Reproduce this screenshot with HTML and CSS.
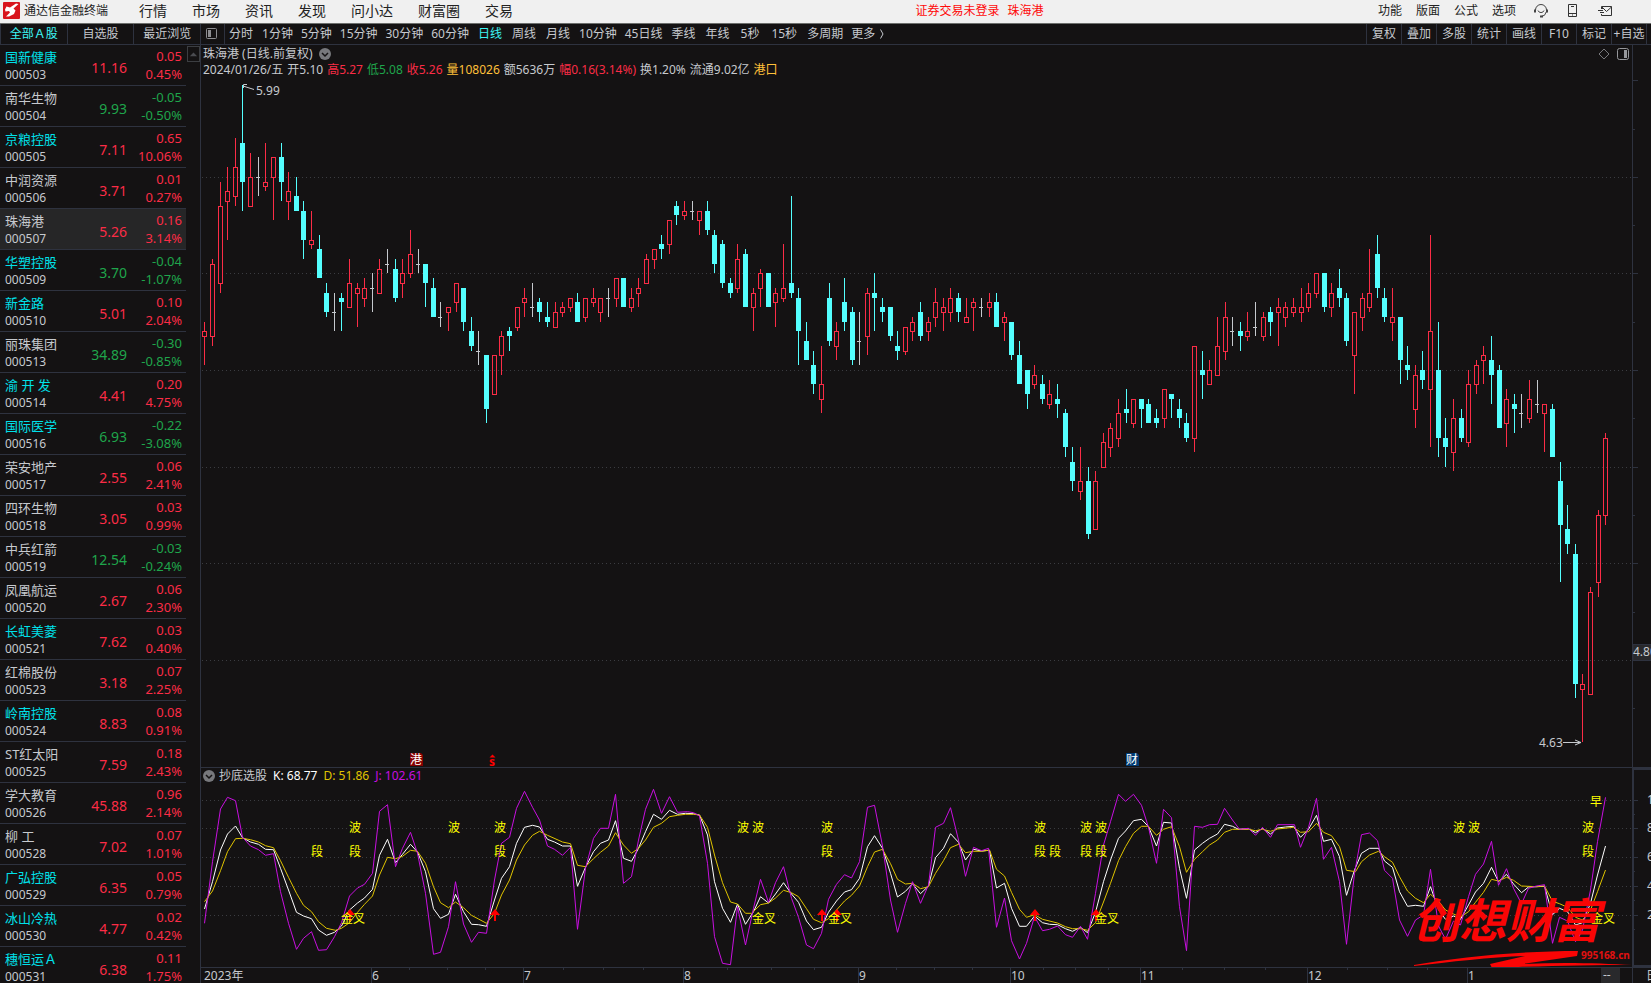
FILE: index.html
```html
<!DOCTYPE html>
<html lang="zh-CN">
<head>
<meta charset="utf-8">
<title>通达信金融终端</title>
<link rel="stylesheet" href="styles.css">
</head>
<body>
<header class="topbar">
  <div class="brand">
    <svg class="logo" viewBox="0 0 17 17" aria-hidden="true"><rect width="17" height="17" rx="1" fill="#d8141c"/><path d="M2 7.500 3.500 4.500 7 5.500 13 1.500 15.500 2 10.500 6.500 12.500 8.500 11 12 6 14.500 3 14.500 7 10.500 6 9 2.500 9.500z" fill="#fff"/></svg>
    <span>通达信金融终端</span>
  </div>
  <nav class="menu">
    <button>行情</button><button>市场</button><button>资讯</button><button>发现</button><button>问小达</button><button>财富圈</button><button>交易</button>
  </nav>
  <p class="login"><span>证券交易未登录</span><span>珠海港</span></p>
  <nav class="menu-right">
    <button>功能</button><button>版面</button><button>公式</button><button>选项</button>
  </nav>
  <div class="tools">
    <button aria-label="客服"><svg viewBox="0 0 16 16"><path d="M2.500 9V7a5.500 5.500 0 0 1 11 0v2M5 7.500a3.200 3.200 0 0 0 6 0M13.200 9a5.500 5.500 0 0 1-5 4.500" fill="none" stroke="#444"/><path d="M1 6.500h2v3H1zM13 6.500h2v3h-2zM7 12.500h3v2H7z" fill="#444"/></svg></button>
    <button aria-label="手机"><svg viewBox="0 0 16 16"><path d="M3.500 1.500h8v12h-8zM3.500 10.500h8M6 3.500h3" fill="none" stroke="#333"/><path d="M7 11.500h1v1H7z" fill="#333"/></svg></button>
    <button aria-label="邮件"><svg viewBox="0 0 16 16"><path d="M4.500 6V3.500h10v9h-10V11M5 4l4.500 4.500L14.500 4M1 7.500h5M3 9.500h4M4 5.500h2" fill="none" stroke="#333"/></svg></button>
  </div>
</header>

<div class="workspace">
  <aside class="sidebar">
    <nav class="tabs"><button class="active">全部Ａ股</button><button>自选股</button><button>最近浏览</button></nav>
    <div class="list-wrap">
      <table class="stocks"><tbody id="stocks"></tbody></table>
      <button class="scroll-up" aria-label="向上滚动"><svg viewBox="0 0 12 14"><path d="M2 9 6 5l4 4z" fill="#4a4b50"/></svg></button>
    </div>
  </aside>

  <main class="chart">
    <div class="toolbar">
      <button class="panel-toggle" aria-label="显示侧栏"><svg viewBox="0 0 13 12"><rect x="1.500" y=".5" width="10" height="10" rx="1" fill="none" stroke="#8d8d91"/><path d="M3 2h3v7H3z" fill="#8d8d91"/></svg></button>
      <nav class="periods">
        <button>分时</button><button class="long">1分钟</button><button class="long">5分钟</button><button class="long">15分钟</button><button class="long">30分钟</button><button class="long">60分钟</button><button class="active">日线</button><button>周线</button><button>月线</button><button class="long">10分钟</button><button class="long">45日线</button><button>季线</button><button>年线</button><button class="sec">5秒</button><button class="sec">15秒</button><button class="long">多周期</button><button class="long more">更多<svg viewBox="0 0 6 12"><path d="M1.500 1.500 4 6l-2.500 4.500" fill="none" stroke="#c6c9ce"/></svg></button>
      </nav>
      <nav class="actions">
        <button>复权</button><button>叠加</button><button>多股</button><button>统计</button><button>画线</button><button>F10</button><button>标记</button><button>+自选</button>
      </nav>
    </div>

    <section class="panel price-panel">
      <svg id="price" viewBox="201 45 1450 722" preserveAspectRatio="xMinYMin meet" aria-label="珠海港日线"></svg>
      <div class="caption">
        <h1>珠海港 (日线.前复权)<svg class="drop" viewBox="0 0 12 12"><circle cx="6" cy="6" r="6" fill="#77787c"/><path d="M3 5l3 3 3-3" fill="none" stroke="#141213" stroke-width="1.500"/></svg></h1>
        <p class="quote"><span>2024/01/26/五</span><span>开5.10</span><span class="up">高5.27</span><span class="down">低5.08</span><span class="up">收5.26</span><span class="gold">量108026</span><span>额5636万</span><span class="up">幅0.16(3.14%)</span><span>换1.20%</span><span>流通9.02亿</span><span class="gold">港口</span></p>
      </div>
      <div class="corner">
        <svg viewBox="0 0 12 12"><path d="M6 1l5 5-5 5-5-5z" fill="none" stroke="#77787c"/></svg>
        <svg viewBox="0 0 12 12"><rect x=".5" y=".5" width="11" height="11" rx="2" fill="none" stroke="#96979b"/><path d="M7 2h3v8H7z" fill="#96979b"/></svg>
      </div>
    </section>

    <section class="panel kdj-panel">
      <svg id="kdj" viewBox="201 768 1450 199" preserveAspectRatio="xMinYMin meet" aria-label="抄底选股"></svg>
      <p class="kdj-caption"><svg class="drop" viewBox="0 0 12 12"><circle cx="6" cy="6" r="6" fill="#77787c"/><path d="M3 5l3 3 3-3" fill="none" stroke="#141213" stroke-width="1.500"/></svg><span>抄底选股</span><span class="k">K: 68.77</span><span class="d">D: 51.86</span><span class="j">J: 102.61</span></p>
    </section>

    <section class="panel time-panel">
      <svg id="time" viewBox="201 968 1450 15" preserveAspectRatio="xMinYMin meet" aria-label="时间轴"></svg>
    </section>
  </main>
</div>
<script src="chart.js"></script>
</body>
</html>
```

FILE: styles.css
```css
* { box-sizing: border-box; }
html, body { height: 100%; }
body {
  margin: 0;
  display: flex;
  flex-direction: column;
  overflow: hidden;
  background: #141213;
  color: #c6c9ce;
  font: 12px/16px "Noto Sans", "Noto Sans CJK SC", sans-serif;
}
p, h1 { margin: 0; font-size: 12px; font-weight: 400; }
button {
  margin: 0;
  padding: 0;
  border: 0;
  background: none;
  color: inherit;
  font: inherit;
  white-space: nowrap;
}
svg { display: block; }

.topbar {
  position: relative;
  flex: none;
  display: flex;
  align-items: center;
  height: 24px;
  padding-bottom: 2px;
  background: #f0f0f0;
  border-bottom: 1px solid #6c6e6c;
  color: #222;
}
.brand { display: flex; align-items: center; gap: 4px; width: 139px; padding-left: 3px; }
.logo { width: 17px; height: 17px; }
.menu { display: flex; gap: 25px; font-size: 14px; }
.login {
  position: absolute;
  left: 0;
  right: 0;
  margin: 0 auto;
  width: 128px;
  display: flex;
  gap: 8px;
  color: #ff0a0a;
  white-space: nowrap;
  translate: 154px;
}
.menu-right { display: flex; gap: 14px; margin-left: auto; }
.tools { display: flex; gap: 16px; padding: 0 38px 0 17px; }
.tools svg { width: 16px; height: 16px; }

.workspace { flex: 1; display: flex; min-height: 0; }
.sidebar { flex: none; width: 201px; display: flex; flex-direction: column; border-right: 1px solid #2e323f; }
.tabs { flex: none; display: flex; height: 21px; border-bottom: 1px solid #2e323f; }
.tabs button { flex: 1; border-left: 1px solid #2e323f; }
.active { color: #3df5f5; }
.list-wrap { flex: 1; min-height: 0; display: flex; align-items: flex-start; overflow: hidden; }
.stocks { flex: 1; border-spacing: 0; table-layout: fixed; }
.stocks td { height: 41px; padding: 0; border-bottom: 1px solid #2e323f; vertical-align: middle; text-align: right; font-size: 13px; }
.stocks td:first-child { width: 70px; padding-left: 5px; text-align: left; }
.stocks td:nth-child(2) { padding-top: 6px; width: 57px; font-size: 14px; }
.stocks td:last-child { padding-right: 4px; }
.stocks span { display: block; line-height: 18px; white-space: nowrap; }
.stocks .code { font-size: 12px; line-height: 17px; }
.stocks .selected { background: #262627; }
.up { color: #fb2c46; }
.down { color: #1fa54b; }
.gold { color: #ffc03a; }
.linked { color: #00e1ea; }
.scroll-up { flex: none; width: 13px; height: 16px; margin: 1px 0 0 1px; border: 1px solid #3c3e42; }

.chart { flex: 1; min-width: 0; display: flex; flex-direction: column; }
.toolbar { flex: none; display: flex; height: 21px; border-bottom: 1px solid #2e323f; overflow: hidden; }
.panel-toggle { width: 24px; padding-left: 4px; border-right: 1px solid #2e323f; }
.panel-toggle svg { width: 13px; height: 12px; }
.periods { display: flex; gap: 8px; padding-left: 3px; }
.periods button { padding: 0 1px; }
.periods .long { padding: 0; }
.periods .sec { padding: 0 2px; }
.periods .more { display: flex; align-items: center; gap: 4px; }
.more svg { width: 6px; height: 12px; }
.actions { display: flex; margin-left: auto; padding-right: 4px; border-left: 1px solid #2e323f; }
.actions button { width: 35px; border-right: 1px solid #2e323f; }

.panel { position: relative; flex: none; overflow: hidden; }
.panel > svg { width: 100%; height: 100%; }
.price-panel { flex: 1; min-height: 0; }
.kdj-panel { height: 200px; border-top: 1px solid #2e323f; }
.time-panel { height: 16px; border-top: 1px solid #2e323f; }
.caption { position: absolute; left: 2px; top: 1px; white-space: nowrap; }
.caption h1 { display: flex; align-items: center; gap: 6px; line-height: 16px; }
.quote { display: flex; gap: 4px; }
.drop { width: 12px; height: 12px; }
.corner { position: absolute; right: 22px; top: 3px; display: flex; gap: 7px; }
.corner svg { width: 12px; height: 12px; }
.kdj-caption { position: absolute; left: 2px; top: 0; display: flex; align-items: center; gap: 6px; white-space: nowrap; }
.kdj-caption .drop { margin-right: -2px; }
.k { color: #fff; }
.d { color: #e0c400; }
.j { color: #c80fe0; }

.grid { stroke: #3b3c41; stroke-dasharray: 1 3; }
.frame { stroke: #2e323f; fill: none; }
.axis-text { fill: #c6c9ce; font-size: 12px; }
.signal { fill: #ffff00; font-size: 12px; }
.line { fill: none; stroke-width: 1; vector-effect: non-scaling-stroke; }
.line-k { stroke: #fff; }
.line-d { stroke: #e0c400; }
.line-j { stroke: #c80fe0; }
.mark { fill: #fff; font-size: 12px; }
.stamp { fill: #fa0505; font-family: "Noto Sans CJK SC", sans-serif; font-size: 47px; font-style: italic; font-weight: 700; }
.site { fill: #e01010; font-size: 10px; font-weight: 700; }
```

FILE: chart.js
```javascript
// name, code, price, change, percent, linked
const stocks = `国新健康|000503|11.16|0.05|0.45%|1
南华生物|000504|9.93|-0.05|-0.50%|0
京粮控股|000505|7.11|0.65|10.06%|1
中润资源|000506|3.71|0.01|0.27%|0
珠海港|000507|5.26|0.16|3.14%|0
华塑控股|000509|3.70|-0.04|-1.07%|1
新金路|000510|5.01|0.10|2.04%|1
丽珠集团|000513|34.89|-0.30|-0.85%|0
渝 开 发|000514|4.41|0.20|4.75%|1
国际医学|000516|6.93|-0.22|-3.08%|1
荣安地产|000517|2.55|0.06|2.41%|0
四环生物|000518|3.05|0.03|0.99%|0
中兵红箭|000519|12.54|-0.03|-0.24%|0
凤凰航运|000520|2.67|0.06|2.30%|0
长虹美菱|000521|7.62|0.03|0.40%|1
红棉股份|000523|3.18|0.07|2.25%|0
岭南控股|000524|8.83|0.08|0.91%|1
ST红太阳|000525|7.59|0.18|2.43%|0
学大教育|000526|45.88|0.96|2.14%|0
柳 工|000528|7.02|0.07|1.01%|0
广弘控股|000529|6.35|0.05|0.79%|1
冰山冷热|000530|4.77|0.02|0.42%|1
穗恒运Ａ|000531|6.38|0.11|1.75%|1`;

document.getElementById('stocks').innerHTML = stocks.split('\n').map(row => {
  const [name, code, price, change, pct, linked] = row.split('|');
  const dir = change[0] === '-' ? 'down' : 'up';
  return `<tr class="${code === '000507' ? 'selected' : ''}"><td><span class="${linked === '1' ? 'linked' : ''}">${name}</span><span class="code">${code}</span></td><td class="${dir}">${price}</td><td class="${dir}"><span>${change}</span><span>${pct}</span></td></tr>`;
}).join('');

// Daily bars: direction (R rise, B fall, D flat), then high, body top, body bottom, low in cents below 5.99
const bars = `R49,51,52,58 R36,37,52,54 R20,25,41,43 R17,22,24,32 R11,17,23,25 B0,12,20,26 R14,19,25,25 D15,19,19,23 R12,20,21,22 R15,15,19,28
B12,15,20,24 R18,22,24,28 B19,23,26,26 B24,26,32,36 R26,32,33,34 B31,34,40,40 B41,43,47,48 D43,47,47,51 B43,44,45,51 R36,41,46,46
R41,42,43,50 R40,42,44,46 D39,42,42,47 R36,38,43,43 D34,37,37,39 B36,38,44,45 R36,39,41,44 R30,35,39,40 D34,37,37,39 B37,37,41,46
B40,42,48,48 D45,48,48,50 R46,46,47,51 R41,41,45,47 B42,42,49,51 B48,51,54,55 D51,55,55,58 B56,56,67,70 R56,56,64,64 R51,52,56,60
B50,51,52,55 R46,46,50,51 R42,44,45,48 D41,46,46,48 B44,45,47,49 B45,48,49,50 R45,47,50,50 R45,46,47,48 R44,44,46,47 B43,45,49,49
R44,44,48,49 R42,44,45,46 R44,44,47,49 D42,44,44,48 R40,40,44,46 B40,40,46,46 R42,44,46,47 R40,42,43,46 R35,36,41,41 R34,34,36,38
B31,33,34,36 R28,28,33,35 B24,25,27,29 R24,26,27,28 D24,26,26,28 R26,26,28,31 B24,26,30,31 B30,31,37,39 B32,33,41,42 B40,41,43,44
R33,36,42,43 B34,35,46,46 R42,43,46,51 R38,39,42,46 B39,39,46,46 R42,43,45,50 R33,42,44,45 B23,41,43,44 B42,44,51,58 B49,53,57,57
B55,58,62,64 R54,62,65,68 B41,44,53,54 R49,51,54,57 B40,45,49,51 B46,47,57,58 D47,53,53,58 R42,43,52,56 B39,43,44,51 B44,46,47,49
B46,46,52,53 B51,54,55,57 R50,50,55,56 R48,49,51,53 B45,47,52,53 R48,49,51,53 R42,45,48,50 R44,46,47,51 R42,44,47,49 B43,44,47,49
R44,48,49,49 R44,45,46,51 D44,46,46,48 R43,45,46,48 B43,45,50,50 R47,48,49,53 B49,49,56,57 B53,56,62,62 B59,59,64,67 R58,60,62,63
B60,62,65,66 R61,64,66,67 B62,65,66,69 B67,68,75,77 B75,78,82,84 R75,82,84,86 B79,82,93,94 R80,82,92,92 R72,74,79,79 R70,71,75,77
R65,68,73,75 B63,67,68,70 R65,65,70,71 B65,65,67,71 B65,66,70,70 B67,69,70,71 R63,63,69,71 B64,64,65,69 B65,67,69,71 B68,70,73,74
R54,54,73,76 B55,59,60,65 R57,59,62,62 R48,54,60,60 R45,48,55,57 D48,51,51,54 B49,51,52,55 R47,51,52,53 D45,50,50,52 R47,48,52,53
B46,47,49,52 R44,46,47,54 R45,46,48,50 R44,46,47,48 R42,46,47,49 R41,43,46,47 R39,39,43,44 B39,39,46,47 R41,43,46,48 B38,42,44,46
B43,44,53,54 R47,47,56,64 R43,44,48,51 R34,43,46,47 B31,35,42,44 B42,44,48,49 R42,48,49,53 B48,48,57,62 B54,58,59,61 R58,60,67,71
B55,59,61,63 R31,51,63,75 B49,59,73,77 B69,73,75,79 R65,69,76,80 B67,69,73,74 R59,62,74,75 R57,58,62,64 R54,56,57,62 B52,57,60,66
B58,59,71,71 R63,65,70,75 B64,66,67,72 D64,68,68,71 R61,65,69,70 D61,66,66,68 R66,66,68,76 B66,67,77,77 B78,82,91,103 B87,92,95,97
B95,97,124,127 R122,124,125,136 R104,105,126,126 R88,89,103,106 R72,73,89,91`.split(/\s+/);

const yOf = cents => Math.round(85 + cents * 4.83);
const hLine = (x1, x2, y, cls) => `<path class="${cls}" d="M${x1} ${y + 0.5}H${x2}"/>`;
const text = (x, y, s, cls) => `<text x="${x}" y="${y}" class="${cls}">${s}</text>`;

const paths = { R: '', B: '', D: '' };
bars.forEach((bar, i) => {
  const kind = bar[0];
  const [high, top, bottom, low] = bar.slice(1).split(',').map(n => yOf(+n));
  const x = Math.floor(204.9 + 7.613 * i);
  if (kind === 'B') {
    paths.B += `M${x} ${high}h1V${low}h-1zM${x - 2} ${top}h5V${bottom}h-5z`;
  } else if (kind === 'D') {
    paths.D += `M${x} ${high}h1V${low}h-1zM${x - 2} ${top}h4v1h-4z`;
  } else {
    paths.R += `M${x} ${high}h1V${top}h-1zM${x - 2} ${top}h5V${bottom + 1}h-5zM${x - 1} ${top + 1}V${bottom}h3V${top + 1}z`;
    if (low > bottom) paths.R += `M${x} ${bottom + 1}h1V${low}h-1z`;
  }
});

let price = '';
[177, 273, 370, 467, 563, 660].forEach(y => { price += hLine(202, 1632, y, 'grid'); });
[80, 177, 273, 370, 467, 563, 660].forEach(y => { price += hLine(1633, 1638, y, 'frame'); });
[129, 225, 322, 418, 515, 612, 708].forEach(y => { price += hLine(1633, 1635, y, 'frame'); });
price += '<path class="frame" d="M1632.500 45V767"/>';
price += `<g shape-rendering="crispEdges"><path fill="#fb2c46" d="${paths.R}"/><path fill="#54ffff" d="${paths.B}"/><path fill="#c6c9ce" d="${paths.D}"/></g>`;
price += '<path fill="none" stroke="#c6c9ce" d="M254 89.500 243 86M247 84.500h-3.500V88"/>' + text(256, 95, '5.99', 'axis-text');
price += text(1539, 747, '4.63', 'axis-text') + '<path fill="none" stroke="#c6c9ce" d="M1563 742.500h18M1575 740l6 2.500-6 2.500"/>';
price += '<path class="frame" style="fill:#29292c" d="M1633 644.500h18v16h-18z"/>' + text(1633, 656, '4.80', 'axis-text');
price += '<path fill="#850000" d="M410 753h11l2 2v11h-13z"/>' + text(410, 764, '港', 'mark');
price += '<path fill="#ff0000" d="M492.500 754.500l3 3h-6z"/><text x="489" y="766" fill="#ff0000" font-size="12" font-weight="700">s</text>';
price += '<path fill="#003b74" d="M1126 753h11l2 2v11h-13z"/>' + text(1126, 764, '财', 'mark');
document.getElementById('price').innerHTML = price;

// Indicator vertices, three units to a pixel; each segment starts at its own origin
const lines = {
  j: [[200, '13,550 37,365 61,207 82,172 106,182 127,292 151,318 175,329 196,346 220,341 241,455 265,550 289,628 310,595 334,575 355,631 379,629 403,590 424,548 448,468 472,444 493,433 517,400 538,214 562,194 586,380 607,325 631,277 652,340 676,460 700,643 721,637 745,560 766,425 790,552 814,607 835,577 859,580 883,420 904,310 928,292 949,205 973,154 997,202 1018,240 1042,318 1063,328 1087,346 1111,322 1132,568 1156,385 1180,295 1201,265 1225,265 1246,163 1270,430 1294,410 1315,300 1336,208 1360,148 1384,220 1408,170 1432,217 1462,215 1480,218'],
    [680, '58,228 82,370 103,590 127,670 151,674 172,500 196,615 220,505 241,418 265,487 286,428 310,380 334,475 355,532 379,615 400,626 424,580 445,478 469,433 493,404 514,414 538,365 562,202 583,196 607,318 631,480 652,577 676,490 697,425 721,490 745,435 766,262 790,250 811,203 835,300 856,409 880,322 904,332 926,325 949,562 973,474 994,602 1018,657 1039,610 1063,530 1087,572 1108,568 1132,558 1156,584 1177,592 1201,559 1222,598 1246,460 1270,315 1291,245 1315,163 1336,184 1360,163 1384,196 1405,262 1429,370 1450,208 1474,233'],
    [1151, '85,500 106,632 130,259 154,262 175,254 199,253 220,205 244,240 265,268 292,265 313,286 334,262 358,292 379,254 430,254 448,322 472,262 496,175 517,358 541,322 565,425 586,613 610,400 631,284 655,279 679,302 700,391 724,415 745,540 769,589 793,540 817,525 838,388 862,558 883,598 907,543 928,555 952,470 973,403 997,372 1021,304 1042,436 1066,386 1087,445 1111,491 1132,445 1156,438 1180,434 1204,610 1225,532 1249,543 1273,605 1294,570 1318,450 1339,305 1363,172']],
  k: [[200, '13,507 37,425 61,330 82,282 106,258 127,293 151,306 175,313 196,328 220,329 241,385 265,450 289,517 310,528 334,536 355,570 379,586 403,577 424,558 448,510 472,489 493,474 517,448 538,346 562,298 586,368 607,343 631,313 652,336 676,395 700,506 721,535 745,523 766,463 790,515 814,553 835,554 859,559 883,480 904,415 928,380 949,310 973,262 997,256 1018,261 1042,298 1063,306 1087,318 1111,318 1132,439 1156,382 1180,335 1201,310 1225,300 1246,242 1270,355 1294,364 1315,325 1336,275 1360,223 1384,238 1408,211 1432,223 1456,220 1480,221'],
    [680, '58,225 82,285 103,425 127,505 151,547 172,492 196,553 220,515 241,470 265,489 286,462 310,428 334,462 355,487 379,543 400,569 424,562 445,517 469,483 493,456 514,449 538,415 562,320 583,287 607,325 631,400 652,471 676,454 697,431 721,461 745,438 766,353 790,325 811,281 835,307 856,360 880,328 904,333 928,331 949,444 973,430 994,505 1018,559 1039,559 1063,528 1087,548 1108,553 1132,554 1156,566 1177,574 1201,562 1222,578 1246,517 1270,425 1291,360 1315,295 1336,273 1360,242 1384,238 1405,260 1429,318 1450,247 1474,249'],
    [1151, '85,385 106,475 130,330 154,310 175,295 199,282 220,253 244,259 262,268 292,266 313,278 334,265 358,282 379,264 403,261 427,259 448,292 472,268 496,226 517,304 541,298 565,350 586,466 610,390 631,340 655,325 682,325 700,363 724,382 745,455 769,499 793,496 817,499 838,440 862,510 883,538 907,528 928,538 952,495 973,456 997,430 1021,382 1042,425 1066,403 1087,432 1111,458 1132,441 1156,440 1180,439 1204,524 1225,505 1249,515 1273,555 1294,548 1318,490 1339,405 1363,318']],
  d: [[200, '13,485 37,453 61,392 82,335 106,296 127,295 151,299 175,306 196,317 220,323 241,362 265,412 289,460 310,496 334,515 355,545 379,565 406,571 424,565 448,548 472,517 493,493 517,468 538,405 562,352 586,356 607,349 631,331 652,334 676,370 700,440 721,488 745,503 766,486 790,503 814,526 835,537 859,550 883,520 904,465 928,420 949,360 973,315 997,286 1018,274 1042,286 1087,306 1111,311 1132,376 1156,380 1180,356 1201,337 1225,318 1246,278 1270,315 1294,340 1315,325 1336,300 1360,262 1384,250 1408,230 1432,226 1456,223 1480,223'],
    [680, '58,225 82,262 103,345 127,428 151,486 172,492 196,520 214,520 241,494 265,489 286,474 310,451 334,458 355,470 379,506 400,538 424,548 445,536 469,510 493,483 514,466 538,438 562,380 583,336 607,328 631,371 652,418 676,432 697,430 721,446 745,440 766,400 790,362 811,323 835,313 856,338 880,334 904,334 928,330 949,388 973,408 994,457 1018,508 1039,532 1063,524 1087,538 1132,549 1156,560 1177,566 1201,566 1222,571 1246,548 1270,486 1291,430 1315,362 1336,320 1360,280 1384,259 1405,259 1429,286 1450,268 1474,260'],
    [1151, '85,320 106,397 130,358 154,335 175,315 199,300 220,277 244,268 292,268 313,272 334,268 358,274 379,267 427,262 448,277 472,275 496,250 517,277 541,287 565,320 586,391 613,395 631,365 655,345 682,334 700,350 724,367 745,410 769,453 793,475 817,488 838,463 862,484 883,510 907,522 928,531 952,515 973,487 997,457 1021,418 1042,423 1066,412 1087,421 1111,438 1156,440 1180,438 1204,484 1225,491 1249,502 1273,532 1294,540 1318,510 1339,455 1363,390']]
};

const drawLine = key => {
  const pts = lines[key].flatMap(([origin, seg]) => seg.split(' ').map(p => {
    const [x, y] = p.split(',').map(Number);
    return `${Math.floor(origin + x / 3) + 0.5},${(740 + y / 3).toFixed(1)}`;
  }));
  return `<polyline class="line line-${key}" points="${pts.join(' ')}"/>`;
};

let kdj = '';
[800, 828, 857, 886, 915].forEach((y, i) => {
  kdj += hLine(202, 1632, y, 'grid') + hLine(1633, 1638, y, 'frame') + hLine(1633, 1635, y + 14, 'frame');
  kdj += text(1647, y + 4, 100 - i * 20, 'axis-text');
});
kdj += '<path class="frame" stroke-width="2" d="M1651 769H1633V966H1651"/>';
kdj += drawLine('k') + drawLine('d') + drawLine('j');
[349, 448, 494, 737, 752, 821, 1034, 1080, 1095, 1453, 1468, 1582].forEach(x => { kdj += text(x, 832, '波', 'signal'); });
[311, 349, 494, 821, 1034, 1049, 1080, 1095, 1582].forEach(x => { kdj += text(x, 856, '段', 'signal'); });
kdj += text(1590, 806, '早', 'signal');
[350, 495, 822, 837, 1035, 1096].forEach(x => {
  kdj += `<path fill="#ff0000" d="M${x} 909l5 6h-4v6h-2v-6h-4z"/>`;
});
[341, 752, 828, 1095, 1591].forEach(x => { kdj += text(x, 923, '金叉', 'signal'); });
kdj += '<path fill="#fa0505" d="M1414 965C1460 957 1520 951 1578 951L1577 956 1522 964C1560 962 1600 963 1632 965 1590 965 1540 966 1492 968L1490 964 1525 956C1490 957 1450 962 1414 966z"/>';
kdj += text(1412, 938, '创想财富', 'stamp') + text(1581, 959, '995168.cn', 'site');
document.getElementById('kdj').innerHTML = kdj;

let time = '';
[[371, 6], [523, 7], [683, 8], [858, 9], [1010, 10], [1140, 11], [1307, 12], [1467, 1]].forEach(([x, label]) => {
  time += `<path class="frame" d="M${x + 0.5} 968V983"/>` + text(x + 1, 980, label, 'axis-text');
});
[409, 447, 485, 563, 603, 643, 727, 771, 814, 896, 934, 972, 1043, 1075, 1108, 1182, 1224, 1265, 1347, 1387, 1427].forEach(x => {
  time += `<path class="frame" d="M${x + 0.5} 968v2"/>`;
});
time += '<path fill="#29292c" d="M1601 968h19v15h-19z"/>' + text(1603, 979, '--', 'axis-text');
time += text(204, 980, '2023年', 'axis-text') + '<path class="frame" d="M1632.500 968V983"/>' + text(1646, 980, '日线', 'axis-text');
document.getElementById('time').innerHTML = time;
```
